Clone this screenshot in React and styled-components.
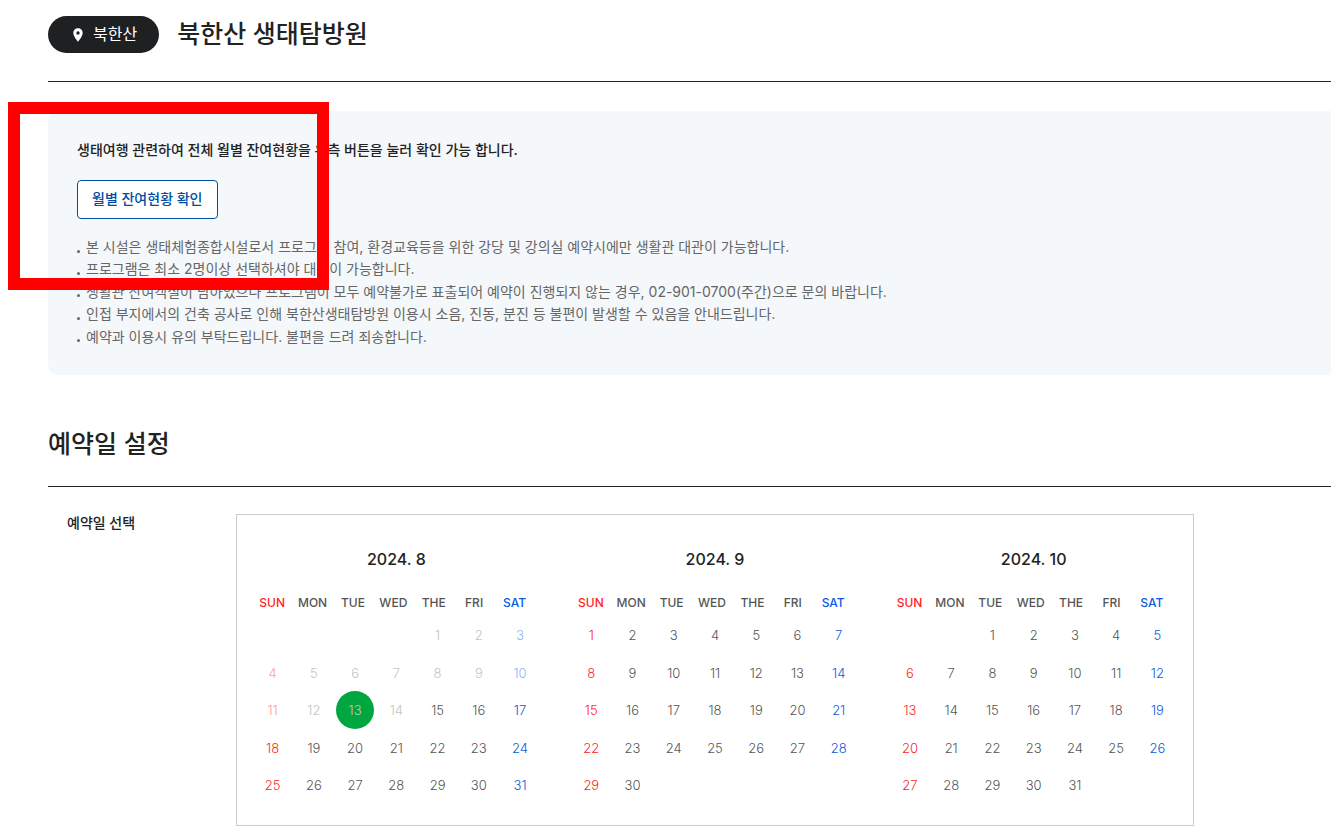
import React, { useState } from "react";
import styled, { createGlobalStyle } from "styled-components";
import { MdLocationOn } from "react-icons/md";

const GlobalStyle = createGlobalStyle`
  * {
    box-sizing: border-box;
  }

  body {
    margin: 0;
    background-color: #fff;
    color: #222;
    font-family: Inter, "Noto Sans CJK KR", sans-serif;
    font-size: 14px;
    overflow-x: hidden;
  }

  button {
    font-family: inherit;
    cursor: pointer;
  }
`;

const Container = styled.main`
  padding: 16px 0 11px 48px;
`;

const Header = styled.header`
  display: flex;
  align-items: flex-start;
  gap: 18px;
  height: 66px;
  border-bottom: 1px solid #222;
`;

const Badge = styled.span`
  display: flex;
  align-items: center;
  gap: 7px;
  height: 37px;
  padding: 0 22px;
  border-radius: 20px;
  background-color: #1f2022;
  color: #fff;
  font-size: 16px;
  line-height: 37px;
`;

const Title = styled.h1`
  margin: 0;
  font-size: 25px;
  font-weight: 500;
  line-height: 36px;
`;

const Notice = styled.section`
  position: relative;
  margin-top: 29px;
  padding: 28px 29px 27px;
  border-radius: 10px 0 0 10px;
  background-color: #f4f8fb;
`;

const NoticeTitle = styled.p`
  margin: 0 0 19px;
  font-weight: 500;
  line-height: 22px;
`;

const CheckButton = styled.button`
  display: block;
  height: 39px;
  margin-bottom: 17px;
  padding: 0 14px 3px;
  border: 1px solid #004ea2;
  border-radius: 4px;
  background-color: #fff;
  color: #004ea2;
  font-size: 14px;
  font-weight: 500;
`;

const NoticeList = styled.ul`
  margin: 0;
  padding: 0;
  list-style: none;
`;

const NoticeItem = styled.li`
  display: flex;
  align-items: center;
  gap: 6px;
  color: #666;
  font-weight: 400;
  line-height: 1.6;

  &::before {
    content: "";
    flex: none;
    width: 3px;
    height: 3px;
    margin-top: 8px;
    border-radius: 50%;
    background-color: #666;
  }
`;

const Highlight = styled.div`
  position: absolute;
  top: -9px;
  left: -40px;
  width: 321px;
  height: 188px;
  border: 12px solid #f00;
  pointer-events: none;
`;

const SectionTitle = styled.h2`
  margin: 51px 0 0;
  padding-bottom: 24px;
  border-bottom: 1px solid #222;
  font-size: 25px;
  font-weight: 500;
  line-height: 36px;
`;

const Field = styled.div`
  display: flex;
  align-items: flex-start;
  padding: 27px 0 0 19px;
`;

const FieldLabel = styled.h3`
  flex: none;
  width: 169px;
  margin: 0;
  font-size: 14px;
  font-weight: 500;
  line-height: 18px;
`;

const Calendars = styled.div`
  display: flex;
  flex: 1;
  max-width: 958px;
  padding: 32px 0 21px;
  border: 1px solid #ccc;
`;

const Month = styled.table`
  display: block;
  flex: 1;
  padding: 0 15px;
`;

const MonthName = styled.caption`
  display: block;
  font-size: 16px;
  font-weight: 500;
  line-height: 24px;
`;

const WeekHead = styled.thead`
  display: block;
  padding: 20px 6px 0 0;
`;

const Weeks = styled.tbody`
  display: grid;
  grid-template-rows: repeat(5, minmax(0, 1fr));
  height: 188px;
  margin-top: 1px;
`;

const Week = styled.tr`
  display: grid;
  grid-template-columns: repeat(7, 1fr);
  align-items: center;
`;

const dayColors = {
  sun: { on: "#ff1f26", off: "#ff9c9f" },
  sat: { on: "#0a5be0", off: "#8ab6f0" },
  day: { on: "#555", off: "#c4c4c4" },
};

const DayName = styled.th`
  padding: 0;
  color: ${({ $kind }) => dayColors[$kind].on};
  font-size: 12px;
  font-weight: 500;
  line-height: 24px;
  text-align: center;
`;

const DayCell = styled.td`
  display: flex;
  justify-content: center;
  height: 38px;
  padding: 0;
`;

const DayButton = styled.button`
  flex: none;
  width: 38px;
  height: 38px;
  padding: 0;
  border: none;
  border-radius: 50%;
  background-color: ${({ $today }) => ($today ? "#00a63f" : "transparent")};
  color: ${({ $kind, disabled }) => dayColors[$kind][disabled ? "off" : "on"]};
  font-size: 13px;
  font-weight: 300;
`;

const dayNames = ["SUN", "MON", "TUE", "WED", "THE", "FRI", "SAT"];

const months = [
  { name: "2024. 8", offset: 4, days: 31, today: 13, closed: 14 },
  { name: "2024. 9", offset: 0, days: 30, closed: 0 },
  { name: "2024. 10", offset: 2, days: 31, closed: 0 },
];

const notices = [
  "본 시설은 생태체험종합시설로서 프로그램 참여, 환경교육등을 위한 강당 및 강의실 예약시에만 생활관 대관이 가능합니다.",
  "프로그램은 최소 2명이상 선택하셔야 대관이 가능합니다.",
  "생활관 잔여객실이 남아있으나 프로그램이 모두 예약불가로 표출되어 예약이 진행되지 않는 경우, 02-901-0700(주간)으로 문의 바랍니다.",
  "인접 부지에서의 건축 공사로 인해 북한산생태탐방원 이용시 소음, 진동, 분진 등 불편이 발생할 수 있음을 안내드립니다.",
  "예약과 이용시 유의 부탁드립니다. 불편을 드려 죄송합니다.",
];

const getKind = (index) => (index === 0 ? "sun" : index === 6 ? "sat" : "day");

const Calendar = ({ month, selected, onSelect }) => {
  const weeks = [0, 1, 2, 3, 4].map((week) =>
    dayNames.map((_, i) => {
      const date = week * 7 + i + 1 - month.offset;
      return date > 0 && date <= month.days ? date : null;
    })
  );

  return (
    <Month>
      <MonthName>{month.name}</MonthName>
      <WeekHead>
        <Week>
          {dayNames.map((name, i) => (
            <DayName key={name} scope="col" $kind={getKind(i)}>
              {name}
            </DayName>
          ))}
        </Week>
      </WeekHead>
      <Weeks>
        {weeks.map((week, w) => (
          <Week key={w}>
            {week.map((date, i) => (
              <DayCell key={i}>
                {date && (
                  <DayButton
                    type="button"
                    $kind={getKind(i)}
                    $today={date === month.today}
                    disabled={date <= month.closed}
                    aria-pressed={selected === `${month.name}. ${date}`}
                    onClick={() => onSelect(`${month.name}. ${date}`)}
                  >
                    {date}
                  </DayButton>
                )}
              </DayCell>
            ))}
          </Week>
        ))}
      </Weeks>
    </Month>
  );
};

const App = () => {
  const [selected, setSelected] = useState(null);

  return (
    <>
      <GlobalStyle />
      <Container>
        <Header>
          <Badge>
            <MdLocationOn size={16} />
            북한산
          </Badge>
          <Title>북한산 생태탐방원</Title>
        </Header>
        <Notice>
          <NoticeTitle>
            생태여행 관련하여 전체 월별 잔여현황을 우측 버튼을 눌러 확인 가능
            합니다.
          </NoticeTitle>
          <CheckButton type="button">월별 잔여현황 확인</CheckButton>
          <NoticeList>
            {notices.map((notice) => (
              <NoticeItem key={notice}>{notice}</NoticeItem>
            ))}
          </NoticeList>
          <Highlight />
        </Notice>
        <SectionTitle>예약일 설정</SectionTitle>
        <Field>
          <FieldLabel id="date-label">예약일 선택</FieldLabel>
          <Calendars role="group" aria-labelledby="date-label">
            {months.map((month) => (
              <Calendar
                key={month.name}
                month={month}
                selected={selected}
                onSelect={setSelected}
              />
            ))}
          </Calendars>
        </Field>
      </Container>
    </>
  );
};

export default App;
